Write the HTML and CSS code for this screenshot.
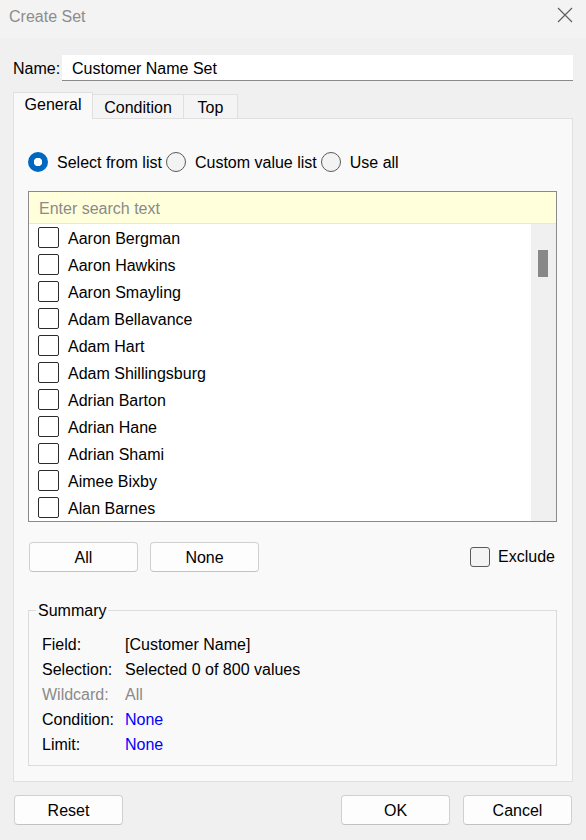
FILE: index.html
```html
<!DOCTYPE html>
<html lang="en">
<head>
  <meta charset="UTF-8">
  <meta name="viewport" content="width=device-width, initial-scale=1.0">
  <title>Create Set</title>
  <link rel="stylesheet" href="styles.css">
</head>
<body>
  <div class="dialog">
    <!-- Title bar -->
    <div class="titlebar">
      <span class="title">Create Set</span>
      <svg class="close" width="16" height="16" viewBox="0 0 16 16">
        <path d="M1 1 L15 15 M15 1 L1 15" stroke="#5f5f5f" stroke-width="1.2" fill="none"/>
      </svg>
    </div>

    <div class="dialog-body">
      <div class="name-row">
        <span class="name-label">Name:</span>
        <div class="name-input">Customer Name Set</div>
      </div>

      <!-- Tabs -->
      <div class="tabs">
        <div class="tab active">General</div>
        <div class="tab tab-condition">Condition</div>
        <div class="tab tab-top">Top</div>
      </div>

      <div class="panel">
        <div class="mode-row">
          <span class="radio checked"></span><span class="radio-label">Select from list</span>
          <span class="radio"></span><span class="radio-label">Custom value list</span>
          <span class="radio"></span><span class="radio-label">Use all</span>
        </div>

        <div class="listbox">
          <div class="search">Enter search text</div>
          <div class="list-area">
            <ul class="items">
              <li class="item"><span class="check"></span>Aaron Bergman</li>
              <li class="item"><span class="check"></span>Aaron Hawkins</li>
              <li class="item"><span class="check"></span>Aaron Smayling</li>
              <li class="item"><span class="check"></span>Adam Bellavance</li>
              <li class="item"><span class="check"></span>Adam Hart</li>
              <li class="item"><span class="check"></span>Adam Shillingsburg</li>
              <li class="item"><span class="check"></span>Adrian Barton</li>
              <li class="item"><span class="check"></span>Adrian Hane</li>
              <li class="item"><span class="check"></span>Adrian Shami</li>
              <li class="item"><span class="check"></span>Aimee Bixby</li>
              <li class="item"><span class="check"></span>Alan Barnes</li>
            </ul>
            <div class="scrollbar"><div class="thumb"></div></div>
          </div>
        </div>

        <div class="list-actions">
          <button class="btn">All</button>
          <button class="btn">None</button>
          <label class="exclude"><span class="exclude-box"></span>Exclude</label>
        </div>

        <fieldset class="summary">
          <legend>Summary</legend>
          <div class="summary-grid">
            <span>Field:</span><span>[Customer Name]</span>
            <span>Selection:</span><span>Selected 0 of 800 values</span>
            <span class="muted">Wildcard:</span><span class="muted">All</span>
            <span>Condition:</span><span class="link">None</span>
            <span>Limit:</span><span class="link">None</span>
          </div>
        </fieldset>
      </div>

      <div class="footer">
        <button class="btn">Reset</button>
        <div class="footer-right">
          <button class="btn">OK</button>
          <button class="btn">Cancel</button>
        </div>
      </div>
    </div>
  </div>
</body>
</html>
```

FILE: styles.css
```css
:root {
  --color-window: #f0f0f0;
  --color-title: #f3f3f3;
  --color-panel: #f9f9f9;
  --color-border: #e0e0e0;
  --color-text: #000000;
  --color-muted: #8a8a8a;
  --color-link: #0000ff;
  --font-ui: "Liberation Sans", Arial, sans-serif;
}

* {
  margin: 0;
  padding: 0;
  box-sizing: border-box;
}

body {
  background-color: var(--color-window);
  color: var(--color-text);
  font-family: var(--font-ui);
  font-size: 16px;
  line-height: 20px;
}

.dialog {
  width: 586px;
  height: 840px;
  overflow: hidden;
}

/* Title bar */
.titlebar {
  height: 38px;
  background-color: var(--color-title);
  display: flex;
  align-items: flex-start;
  justify-content: space-between;
  padding: 7px 13px 0 9px;
}

.title {
  color: #8c8c8c;
  font-size: 16px;
}

.close {
  margin-top: 0;
}

.dialog-body {
  padding: 0 13px;
}

.name-row {
  display: flex;
  align-items: center;
  margin-top: 17px;
  height: 26px;
  padding-top: 1px;
}

.name-label {
  width: 49px;
}

.name-input {
  flex: 1;
  height: 26px;
  margin-top: -1px;
  background: #ffffff;
  border-bottom: 1px solid #8a8a8a;
  padding: 4px 10px 0;
}

/* Tabs */
.tabs {
  display: flex;
  align-items: flex-end;
  margin-top: 11px;
  height: 26px;
}

.tab {
  height: 24px;
  border: 1px solid var(--color-border);
  border-bottom: none;
  border-left: none;
  background-color: #f4f4f4;
  text-align: center;
  padding-top: 3px;
}

.tab.active {
  position: relative;
  z-index: 1;
  width: 80px;
  height: 27px;
  margin-bottom: -1px;
  border-left: 1px solid var(--color-border);
  background-color: var(--color-panel);
  padding-top: 2px;
}

.tab-condition {
  width: 91px;
}

.tab-top {
  width: 54px;
}

.panel {
  height: 664px;
  background-color: var(--color-panel);
  border: 1px solid var(--color-border);
  padding: 33px 15px 0 14px;
}

/* Radio row */
.mode-row {
  display: flex;
  align-items: center;
  height: 20px;
}

.radio {
  width: 20px;
  height: 20px;
  border-radius: 50%;
  border: 1px solid #5a5a5a;
  background-color: #f3f3f3;
  flex-shrink: 0;
}

.radio.checked {
  border: none;
  background: radial-gradient(circle, #ffffff 0 4px, #0067c0 4.5px);
}

.radio-label {
  margin-left: 9px;
  margin-right: 4px;
  padding-top: 1px;
}

/* List */
.listbox {
  margin-top: 19px;
  border: 1px solid #8a8a8a;
  background: #ffffff;
}

.search {
  height: 32px;
  background-color: #ffffdc;
  border-bottom: 1px solid #e6e6e6;
  color: #8a8a8a;
  padding: 7px 10px 0;
}

.list-area {
  display: flex;
  height: 297px;
}

.items {
  flex: 1;
  list-style: none;
}

.item {
  display: flex;
  align-items: center;
  height: 27px;
  padding: 2px 0 0 9px;
}

.check {
  width: 21px;
  height: 21px;
  border: 1px solid #2b2b2b;
  border-radius: 2px;
  margin: -2px 9px 0 0;
}

.scrollbar {
  width: 25px;
  background-color: var(--color-window);
  padding: 26px 0 0 7px;
}

.thumb {
  width: 10px;
  height: 27px;
  background-color: #888888;
}

/* Buttons */
.btn {
  width: 109px;
  height: 30px;
  font-family: var(--font-ui);
  font-size: 16px;
  color: var(--color-text);
  background-color: #fdfdfd;
  border: 1px solid #d0d0d0;
  border-bottom-color: #c2c2c2;
  border-radius: 4px;
  padding-top: 2px;
}

.list-actions {
  display: flex;
  align-items: center;
  gap: 12px;
  margin-top: 20px;
  padding-left: 1px;
}

.exclude {
  margin-left: auto;
  display: flex;
  align-items: center;
  padding-right: 2px;
}

.exclude-box {
  width: 20px;
  height: 20px;
  border: 1px solid #5a5a5a;
  border-radius: 3px;
  background-color: #f3f3f3;
  margin-right: 8px;
}

/* Summary */
.summary {
  margin-top: 27px;
  border: 1px solid #dcdcdc;
  padding: 10px 13px 8px;
}

.summary legend {
  margin-left: -6px;
  padding: 2px 2px 0;
  line-height: 20px;
}

.summary-grid {
  display: grid;
  grid-template-columns: 83px auto;
  grid-auto-rows: 25px;
  align-items: center;
  padding-top: 1px;
}

.muted {
  color: #8a8a8a;
}

.link {
  color: var(--color-link);
}

.footer {
  display: flex;
  justify-content: space-between;
  margin-top: 13px;
  padding: 0 1px;
}

.footer-right {
  display: flex;
  gap: 13px;
}
```
